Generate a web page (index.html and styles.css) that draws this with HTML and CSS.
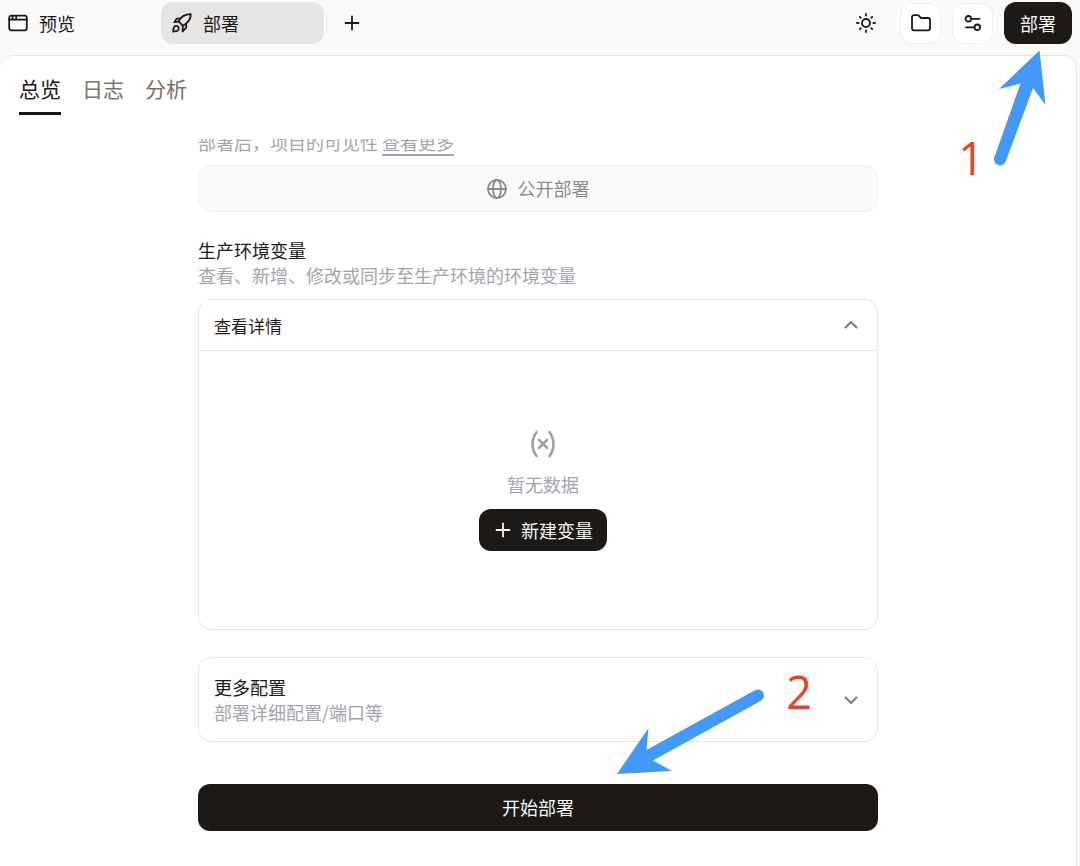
FILE: index.html
```html
<!DOCTYPE html>
<html lang="zh-CN">
<head>
<meta charset="utf-8">
<meta name="viewport" content="width=device-width, initial-scale=1">
<title>部署</title>
<link rel="stylesheet" href="styles.css">
</head>
<body>
<div class="app">
  <header class="topbar">
    <nav class="window-tabs" aria-label="窗口">
      <button class="window-tab" type="button">
        <svg class="icon" viewBox="0 0 20 20"><rect x="1.2" y="2.7" width="17.6" height="14.6" rx="2"/><path d="M1.2 6.7h17.6M4.6 3v3.4M8.2 3v3.4"/></svg>
        预览
      </button>
      <button class="window-tab window-tab-active" type="button">
        <svg class="icon" viewBox="0 0 20 20"><path d="M18.8 1.2C13 1.200 9.300 3.200 6.600 8.200L10.800 12.800C15.800 10.100 18.800 7 18.800 1.200Z"/><path d="M8.800 5.300L4.700 5.700 2.300 9.200l4.300-.6M14.200 10.700v4l-3.600 3.800.2-5.700"/><path d="M5.800 13.400c-1.200-1-3-.7-3.700.5-.8 1.200-.8 2.700-1 4.600 1.900-.2 3.600-.2 4.700-1 1.200-.8 1.200-3 0-4.100z"/></svg>
        部署
      </button>
      <span class="divider"></span>
      <button class="add-tab" type="button" aria-label="新标签"><svg class="icon" viewBox="0 0 20 20"><path d="M10 3.500v13M3.500 10h13"/></svg></button>
    </nav>
    <div class="actions">
      <button class="plain-button" type="button" aria-label="主题"><svg class="icon" viewBox="0 0 20 20"><circle cx="10" cy="10" r="4"/><path d="M10 1v1.600M10 17.400v1.600M1 10h1.600M17.400 10h1.600M3.800 3.800l1 1M15.200 15.200l1 1M3.800 16.200l1-1M15.200 4.800l1-1"/></svg></button>
      <button class="tool-button" type="button" aria-label="文件"><svg class="icon" viewBox="0 0 20 20"><path d="M1 4.200C1 2.900 1.700 2.200 3 2.200h4.200l2.800 2.800h7c1.300 0 2 .7 2 2v8.300c0 1.300-.7 2-2 2H3c-1.300 0-2-.7-2-2z"/></svg></button>
      <button class="tool-button" type="button" aria-label="设置"><svg class="icon" viewBox="0 0 20 20"><circle cx="5.300" cy="5.800" r="2.800"/><circle cx="14.300" cy="14.300" r="2.800"/><path d="M8.100 5.800h8.400M3 14.300h8.500"/></svg></button>
      <button class="primary-button deploy-button" type="button">部署</button>
    </div>
    <div class="note note-first">
      <span class="note-number">1</span>
      <svg class="note-arrow" width="50" height="128" viewBox="0 0 50 128"><path d="M43.500 2.500L49.500 57 37 40 9.700 113.500A6 6 0 0 1-1.600 109.300L24.500 35.500 3 41z"/></svg>
    </div>
  </header>

  <main class="panel">
    <nav class="page-tabs" aria-label="页面">
      <a class="page-tab page-tab-active" href="#overview">总览</a>
      <a class="page-tab" href="#logs">日志</a>
      <a class="page-tab" href="#analytics">分析</a>
    </nav>
    <div class="scroll-area">
      <div class="content">
        <p class="description visibility">部署后，项目的可见性 <a class="more-link" href="#more">查看更多</a></p>
        <button class="public-button" type="button" disabled>
          <svg class="icon" viewBox="0 0 20 20"><circle cx="10" cy="10" r="9"/><ellipse cx="10" cy="10" rx="4" ry="9"/><path d="M1 10h18"/></svg>
          公开部署
        </button>

        <section class="variables">
          <h2 class="title">生产环境变量</h2>
          <p class="description">查看、新增、修改或同步至生产环境的环境变量</p>
          <div class="card details">
            <button class="details-toggle" type="button" aria-expanded="true">
              查看详情
              <svg class="chevron" viewBox="0 0 20 20"><path d="M4 13l6-6 6 6"/></svg>
            </button>
            <div class="empty">
              <svg class="empty-icon" viewBox="0 0 28 28"><path d="M7.500 2.200C2.200 9 2.200 19 7.500 26M20.500 2.200C25.800 9 25.800 19 20.500 26M10 9.800l8 8M18 9.800l-8 8"/></svg>
              <p class="empty-text">暂无数据</p>
              <button class="primary-button new-button" type="button">
                <svg class="icon" viewBox="0 0 20 20"><path d="M10 3.500v13M3.500 10h13"/></svg>
                新建变量
              </button>
            </div>
          </div>
        </section>

        <section class="card config">
          <button class="config-toggle" type="button" aria-expanded="false">
            <span class="config-text">
              <span class="title">更多配置</span>
              <span class="description">部署详细配置/端口等</span>
            </span>
            <svg class="chevron" viewBox="0 0 20 20"><path d="M4 7l6 6 6-6"/></svg>
          </button>
          <div class="note note-second">
            <svg class="note-arrow" width="150" height="108" viewBox="0 -24 150 108"><path d="M1 82L32.500 36 30.500 58 139 -1.700A6 6 0 0 1 145 8.700L37 68.500 56 79z"/></svg>
            <span class="note-number">2</span>
          </div>
        </section>

        <button class="primary-button start-button" type="button">开始部署</button>
      </div>
    </div>
  </main>
</div>
</body>
</html>
```

FILE: styles.css
```css
* { box-sizing: border-box; }

body {
  margin: 0;
  background: #fafaf9;
  color: #1c1917;
  font: 18px/25px "Noto Sans CJK SC", "Noto Sans", sans-serif;
}

button {
  padding: 0;
  border: 0;
  background: none;
  color: inherit;
  font: inherit;
}

h2, p { margin: 0; font-size: 18px; font-weight: 400; }

.app {
  display: flex;
  flex-direction: column;
  height: 100vh;
}

.icon {
  flex: none;
  width: 20px;
  height: 20px;
  fill: none;
  stroke: currentColor;
  stroke-width: 1.8;
  stroke-linecap: round;
  stroke-linejoin: round;
}

.topbar {
  position: relative;
  display: flex;
  justify-content: space-between;
  flex: none;
  padding: 2px 8px 11px 0;
}

.window-tabs, .actions { display: flex; align-items: center; }

.window-tab {
  display: flex;
  align-items: center;
  gap: 11px;
  width: 161px;
  height: 42px;
  padding: 0 8px;
}

.window-tab-active {
  width: 163px;
  padding: 0 11px;
  border-radius: 12px;
  background: #e7e5e4;
}

.divider {
  width: 1px;
  height: 19px;
  margin: 0 15px 0 2px;
  background: #e7e5e4;
}

.add-tab, .plain-button { display: flex; }

.actions { gap: 11px; }

.plain-button { margin-right: 13px; }

.tool-button {
  display: grid;
  place-items: center;
  width: 41px;
  height: 41px;
  border: 1px solid #f0efee;
  border-radius: 12px;
  background: #fff;
}

.primary-button {
  display: flex;
  align-items: center;
  justify-content: center;
  height: 42px;
  border-radius: 12px;
  background: #1c1917;
  color: #fafaf9;
}

.deploy-button { width: 68px; }

.panel {
  display: flex;
  flex-direction: column;
  flex: 1;
  min-height: 0;
  margin-right: 3px;
  border: 1px solid #e7e5e4;
  border-width: 1px 1px 0 0;
  border-radius: 13px 13px 0 0;
  background: #fff;
}

.page-tabs {
  display: flex;
  gap: 21px;
  flex: none;
  padding: 15px 19px 0;
  font-size: 21px;
  line-height: 34px;
}

.page-tab {
  padding-bottom: 7px;
  border-bottom: 3px solid transparent;
  color: #79716b;
  text-decoration: none;
}

.page-tab-active { border-color: #1c1917; color: #1c1917; }

.scroll-area {
  flex: 1;
  min-height: 0;
  margin-top: 24px;
  overflow: hidden;
}

.content {
  width: 680px;
  max-width: calc(100% - 32px);
  margin: 0 auto;
}

.description { color: #a6a3ad; }

.visibility { height: 25px; margin-top: -9px; }

.more-link {
  display: inline-block;
  border-bottom: 2px solid #a6a3ad;
  color: inherit;
  line-height: 23px;
  text-decoration: none;
}

.public-button {
  display: flex;
  align-items: center;
  justify-content: center;
  gap: 11px;
  width: 100%;
  height: 47px;
  margin-top: 10px;
  border: 1px solid #f2f1f0;
  border-radius: 13px;
  background: #fafaf9;
  color: #8d8b8a;
}

.variables { margin-top: 26px; }

.card {
  border: 1px solid #e9e8e8;
  border-radius: 13px;
  background: #fff;
}

.details { margin-top: 11px; }

.details-toggle {
  display: flex;
  align-items: center;
  justify-content: space-between;
  width: 100%;
  height: 51px;
  padding: 0 16px 0 15px;
  border-bottom: 1px solid #e9e8e8;
  font-size: 17px;
}

.chevron {
  width: 20px;
  height: 20px;
  fill: none;
  stroke: #79716b;
  stroke-width: 1.8;
}

.empty {
  display: flex;
  flex-direction: column;
  align-items: center;
  padding: 79px 0 78px 10px;
}

.empty-icon {
  width: 28px;
  height: 28px;
  fill: none;
  stroke: #a09da7;
  stroke-width: 2.6;
  stroke-linecap: round;
}

.empty-text { margin: 14px 0 12px; color: #a6a3ad; }

.new-button { gap: 8px; width: 128px; }

.config { position: relative; margin-top: 27px; }

.config-toggle {
  display: flex;
  align-items: center;
  justify-content: space-between;
  width: 100%;
  height: 83px;
  padding: 0 16px 0 15px;
  text-align: left;
}

.config-text { display: flex; flex-direction: column; }

.start-button {
  width: 100%;
  height: 47px;
  margin-top: 42px;
}

.note {
  position: absolute;
  z-index: 1;
  display: flex;
  pointer-events: none;
}

.note-first {
  top: 48px;
  right: 34px;
  gap: 12px;
  align-items: flex-end;
}

.note-second {
  top: 10px;
  right: 65px;
  gap: 20px;
}

.note-arrow { overflow: visible; fill: #4299f7; }

.note-number {
  color: #f13f26;
  font: 45px/48px "Open Sans", sans-serif;
}

.note-first .note-number { line-height: 36px; }
```
